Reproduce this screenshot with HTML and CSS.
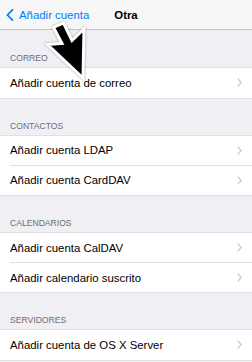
FILE: index.html
```html
<!DOCTYPE html>
<html lang="es">
<head>
<meta charset="utf-8">
<title>Otra</title>
<link rel="stylesheet" href="styles.css">
</head>
<body>
<div class="screen">
  <header class="nav">
    <a class="back" href="#">
      <svg class="back-icon" width="8" height="12" viewBox="0 0 8 12"><path d="M6.5 0.8 L1.4 6 L6.5 11.2" fill="none" stroke="#007aff" stroke-width="1.7" stroke-linecap="round" stroke-linejoin="round"/></svg>
      <span>Añadir cuenta</span>
    </a>
    <h1 class="title">Otra</h1>
    <span class="spacer"></span>
  </header>

  <section class="group">
    <h2 class="group-title">CORREO</h2>
    <ul class="list">
      <li class="row"><span>Añadir cuenta de correo</span><svg class="chev" width="5" height="9" viewBox="0 0 5 9"><path d="M0.7 0.7 L4.2 4.5 L0.7 8.3" fill="none" stroke="#c7c7cc" stroke-width="1.2"/></svg></li>
    </ul>
  </section>

  <section class="group">
    <h2 class="group-title">CONTACTOS</h2>
    <ul class="list">
      <li class="row"><span>Añadir cuenta LDAP</span><svg class="chev" width="5" height="9" viewBox="0 0 5 9"><path d="M0.7 0.7 L4.2 4.5 L0.7 8.3" fill="none" stroke="#c7c7cc" stroke-width="1.2"/></svg></li>
      <li class="row"><span>Añadir cuenta CardDAV</span><svg class="chev" width="5" height="9" viewBox="0 0 5 9"><path d="M0.7 0.7 L4.2 4.5 L0.7 8.3" fill="none" stroke="#c7c7cc" stroke-width="1.2"/></svg></li>
    </ul>
  </section>

  <section class="group">
    <h2 class="group-title">CALENDARIOS</h2>
    <ul class="list">
      <li class="row"><span>Añadir cuenta CalDAV</span><svg class="chev" width="5" height="9" viewBox="0 0 5 9"><path d="M0.7 0.7 L4.2 4.5 L0.7 8.3" fill="none" stroke="#c7c7cc" stroke-width="1.2"/></svg></li>
      <li class="row"><span>Añadir calendario suscrito</span><svg class="chev" width="5" height="9" viewBox="0 0 5 9"><path d="M0.7 0.7 L4.2 4.5 L0.7 8.3" fill="none" stroke="#c7c7cc" stroke-width="1.2"/></svg></li>
    </ul>
  </section>

  <section class="group">
    <h2 class="group-title">SERVIDORES</h2>
    <ul class="list">
      <li class="row"><span>Añadir cuenta de OS X Server</span><svg class="chev" width="5" height="9" viewBox="0 0 5 9"><path d="M0.7 0.7 L4.2 4.5 L0.7 8.3" fill="none" stroke="#c7c7cc" stroke-width="1.2"/></svg></li>
    </ul>
  </section>

  <svg class="cursor" width="252" height="100" viewBox="0 0 252 100">
    <polygon points="83,78 84,29 72,40.5 63.5,23 53.5,27.5 62,43.5 47.5,44.5" fill="#000" stroke="#fff" stroke-width="3" stroke-linejoin="miter"/>
  </svg>
</div>
</body>
</html>
```
FILE: styles.css
```css
* { box-sizing: border-box; }
html, body { margin: 0; padding: 0; }
body {
  background: #efeff4;
  font-family: "Liberation Sans", Arial, sans-serif;
  color: #000;
  width: 252px;
  height: 362px;
  overflow: hidden;
}
.screen {
  position: relative;
  width: 252px;
  height: 362px;
}
.nav {
  height: 30px;
  background: #f7f7f7;
  border-bottom: 1px solid #c4c4c7;
  display: grid;
  grid-template-columns: 1fr auto 1fr;
  align-items: center;
}
.back {
  display: flex;
  align-items: center;
  gap: 5px;
  padding-left: 6px;
  color: #007aff;
  text-decoration: none;
  font-size: 11.4px;
}
.back-icon { display: block; }
.title {
  margin: 0;
  font-size: 11.4px;
  font-weight: bold;
}
.group-title {
  margin: 0;
  height: 38px;
  display: flex;
  align-items: flex-end;
  padding: 0 10px 5px;
  font-size: 8.6px;
  line-height: 9px;
  font-weight: normal;
  color: #6d6d72;
}
.group:first-child .group-title { height: 37.5px; }
.list {
  margin: 0;
  padding: 0;
  list-style: none;
  background: #fff;
  box-shadow: 0 -1px 0 #e0e0e4, 0 1px 0 #e0e0e4;
}
.row {
  height: 29.6px;
  display: flex;
  align-items: center;
  justify-content: space-between;
  padding: 0 10px;
  font-size: 11.4px;
}
.row + .row { border-top: 1px solid #e0e0e4; margin-left: 10px; padding-left: 0; }
.chev { display: block; }
.cursor {
  position: absolute;
  left: 0;
  top: 0;
  filter: drop-shadow(0 0.5px 0.8px rgba(0,0,0,0.35));
}
```
